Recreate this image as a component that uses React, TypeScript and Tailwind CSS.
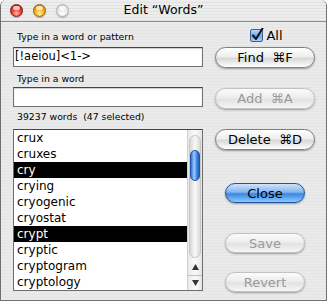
import React from 'react';

const FONT = "font-['Lucida_Grande','DejaVu_Sans',sans-serif]";

const WORDS = [
  'crux',
  'cruxes',
  'cry',
  'crying',
  'cryogenic',
  'cryostat',
  'crypt',
  'cryptic',
  'cryptogram',
  'cryptology',
];
const SELECTED = ['cry', 'crypt'];

// traffic light dot
const Light: React.FC<{ tone: 'red' | 'yellow' | 'gray' }> = ({ tone }) => {
  const body =
    tone === 'red'
      ? 'bg-[radial-gradient(circle_at_50%_75%,#ffb3a3_0%,#e8402c_45%,#a5120a_100%)] border-[#7d1c12]'
      : tone === 'yellow'
        ? 'bg-[radial-gradient(circle_at_50%_75%,#fff0a0_0%,#f4b21a_45%,#b76f00_100%)] border-[#92600c]'
        : 'bg-[radial-gradient(circle_at_50%_75%,#ffffff_0%,#e6e6e6_50%,#c4c4c4_100%)] border-[#b0b0b0]';
  return (
    <div className={`relative w-[13px] h-[13px] rounded-full border ${body} shadow-[0_1px_1px_rgba(0,0,0,0.25)]`}>
      <div className="absolute left-[2px] top-[1px] w-[7px] h-[4px] rounded-full bg-white/70" />
    </div>
  );
};

type BtnProps = { label: string; wide?: boolean; disabled?: boolean; primary?: boolean; className?: string };

const AquaButton: React.FC<BtnProps> = ({ label, wide, disabled, primary, className = '' }) => {
  const size = wide ? 'w-[100px] h-[21px]' : 'w-[80px] h-[20px]';
  const look = primary
    ? 'border-[#24559c] bg-[linear-gradient(to_bottom,#cfe3fa_0%,#84b6ee_45%,#3d86df_55%,#86cbff_100%)] text-black'
    : disabled
      ? 'border-[#c2c2c2] bg-[linear-gradient(to_bottom,#fbfbfb_0%,#ededed_45%,#e2e2e2_55%,#f6f6f6_100%)] text-[#9a9a9a]'
      : 'border-[#7e7e7e] bg-[linear-gradient(to_bottom,#ffffff_0%,#eeeeee_45%,#d8d8d8_55%,#ffffff_100%)] text-black';
  return (
    <div
      className={`${size} ${look} ${className} rounded-full border flex items-center justify-center text-[13px] leading-none shadow-[0_1px_2px_rgba(0,0,0,0.35)]`}
    >
      <span className="whitespace-pre">{label}</span>
    </div>
  );
};

const Checkbox: React.FC = () => (
  <svg width="14" height="14" viewBox="0 0 14 14">
    <defs>
      <linearGradient id="cb" x1="0" y1="0" x2="0" y2="1">
        <stop offset="0" stopColor="#c8def8" />
        <stop offset="0.5" stopColor="#6aa6ec" />
        <stop offset="1" stopColor="#a9d4ff" />
      </linearGradient>
    </defs>
    <rect x="0.5" y="1.5" width="12" height="12" rx="1.5" fill="url(#cb)" stroke="#3c5f94" />
    <path d="M3 7.5 L6 11 L12.5 0.5" fill="none" stroke="#111" strokeWidth="2" strokeLinecap="round" strokeLinejoin="round" />
  </svg>
);

const Field: React.FC<{ value?: string }> = ({ value }) => (
  <div className="h-[20px] bg-white border border-[#6e6e6e] border-t-[#444] shadow-[inset_0_1px_1px_rgba(0,0,0,0.2)] flex items-center pl-[1px] text-[11.5px] text-black">
    {value}
  </div>
);

const Scrollbar: React.FC = () => (
  <div className="w-[15px] flex flex-col bg-[linear-gradient(to_right,#e9e9e9,#fafafa_50%,#e6e6e6)] border-l border-[#d0d0d0]">
    <div className="flex-1 pt-[5px] px-[1px]">
      <div className="h-full rounded-full border border-[#c8c8c8] bg-[linear-gradient(to_right,#d6d6d6,#f9f9f9_50%,#dadada)] pt-[14px]">
        <div className="h-[31px] rounded-full border border-[#1f56a8] bg-[linear-gradient(to_right,#2f6fcf,#9ccaff_40%,#3a80dc_75%,#2260bd)]" />
      </div>
    </div>
    <div className="h-[17px] flex items-center justify-center">
      <svg width="7" height="6" viewBox="0 0 7 6">
        <path d="M3.5 0 L7 6 L0 6 Z" fill="#333" />
      </svg>
    </div>
    <div className="h-[15px] border-t border-[#c0c0c0] flex items-center justify-center">
      <svg width="7" height="6" viewBox="0 0 7 6">
        <path d="M0 0 L7 0 L3.5 6 Z" fill="#333" />
      </svg>
    </div>
  </div>
);

const App: React.FC = () => {
  return (
    <div className={`w-[328px] h-[304px] bg-white ${FONT}`}>
      <div className="w-[327px] h-[301px] flex flex-col rounded-t-[6px] border-x border-b border-[#707070] overflow-hidden bg-[#e9e9e9]">
        {/* Title bar */}
        <div className="relative h-[22px] flex items-center border-b border-[#8c8c8c] bg-[repeating-linear-gradient(to_bottom,#ededed_0px,#ededed_2px,#e2e2e2_2px,#e2e2e2_3px)]">
          <div className="flex gap-[10px] pl-[9px]">
            <Light tone="red" />
            <Light tone="yellow" />
            <Light tone="gray" />
          </div>
          <div className="absolute inset-0 flex items-center justify-center text-[12.5px] text-black pointer-events-none">
            Edit “Words”
          </div>
        </div>

        {/* Body */}
        <div className="flex pl-[12px] bg-[repeating-linear-gradient(to_bottom,#eaeaea_0px,#eaeaea_2px,#e5e5e5_2px,#e5e5e5_3px)] flex-1">
          {/* Left column */}
          <div className="w-[190px] flex flex-col pt-[8px]">
            <div className="h-[14px] leading-[14px] pl-[4px] text-[9.3px] text-black">Type in a word or pattern</div>
            <div className="mt-[3px]">
              <Field value="[!aeiou]<1->" />
            </div>
            <div className="mt-[5px] h-[14px] leading-[14px] pl-[4px] text-[9.3px] text-black">Type in a word</div>
            <div className="mt-[1px]">
              <Field />
            </div>
            <div className="mt-[3px] h-[14px] leading-[14px] pl-[4px] text-[9.3px] text-black whitespace-pre">
              39237 words  (47 selected)
            </div>
            <div className="mt-[5px] h-[162px] flex bg-white border border-[#6e6e6e] border-t-[#444]">
              <div className="flex-1 flex flex-col">
                {WORDS.map((w) => {
                  const sel = SELECTED.includes(w);
                  return (
                    <div
                      key={w}
                      className={`h-[16px] leading-[16px] pl-[3px] text-[12px] ${sel ? 'bg-black text-white' : 'text-black'}`}
                    >
                      {w}
                    </div>
                  );
                })}
              </div>
              <Scrollbar />
            </div>
          </div>

          {/* Right column */}
          <div className="ml-[11px] w-[102px] flex flex-col items-center">
            <div className="mt-[6px] h-[14px] flex items-center gap-[2px] pl-[3px]">
              <Checkbox />
              <span className="text-[13px] leading-none text-black">All</span>
            </div>
            <AquaButton wide label="Find  ⌘F" className="mt-[5px]" />
            <AquaButton wide disabled label="Add  ⌘A" className="mt-[20px]" />
            <AquaButton wide label="Delete  ⌘D" className="mt-[20px]" />
            <AquaButton primary label="Close" className="mt-[33px]" />
            <AquaButton disabled label="Save" className="mt-[30px]" />
            <AquaButton disabled label="Revert" className="mt-[19px]" />
          </div>
        </div>
      </div>
    </div>
  );
};

export default App;
